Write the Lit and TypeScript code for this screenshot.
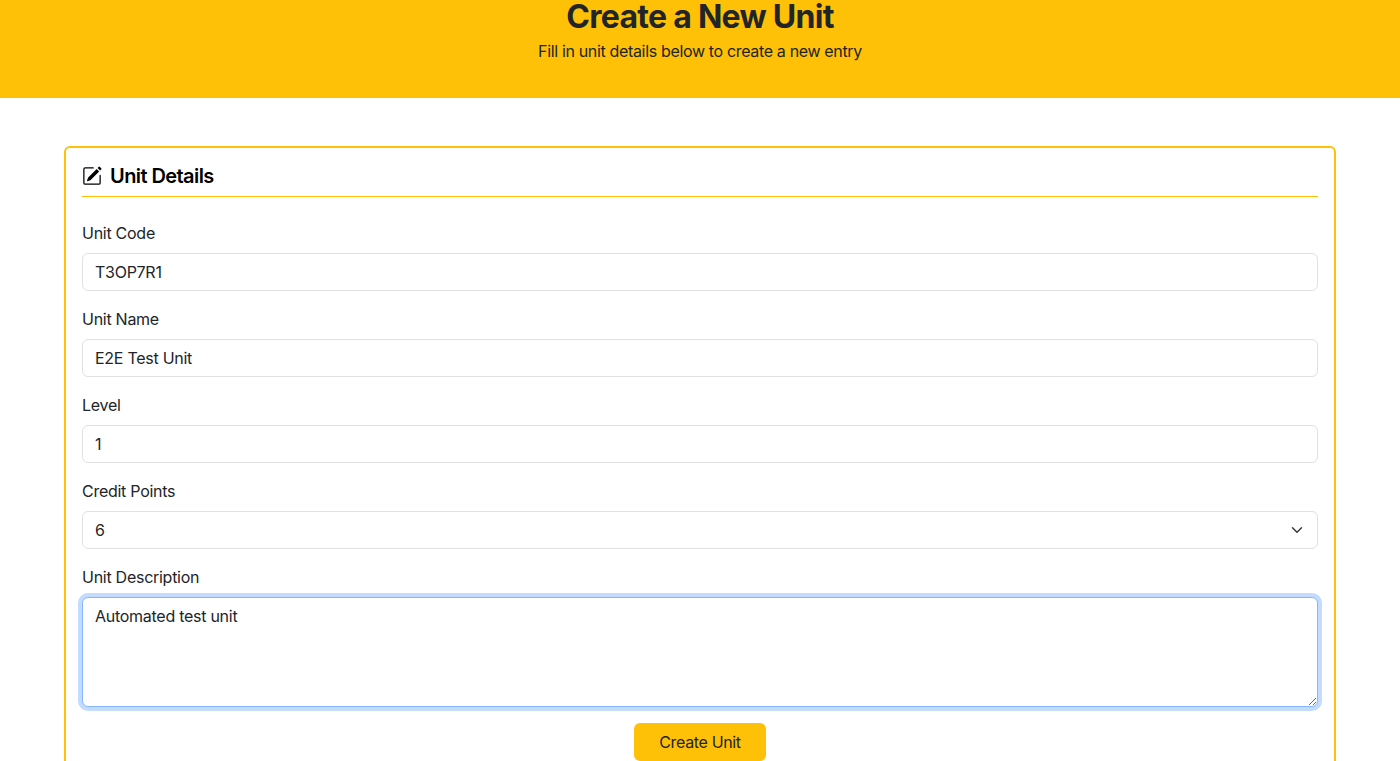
import { LitElement, html, css } from "lit";
import { customElement } from "lit/decorators.js";

@customElement("app-root")
export class AppRoot extends LitElement {
  static styles = css`
    :host {
      display: block;
      height: 761px;
      overflow: hidden;
      background: #fff;
      color: #212529;
      font: 400 16px/24px Inter, "Liberation Sans", sans-serif;
      letter-spacing: -0.27px;
    }
    *, *::before, *::after { box-sizing: border-box; }
    .banner {
      height: 98px;
      background: #ffc107;
      text-align: center;
    }
    h1 {
      margin: 0 0 5px;
      font-size: 32px;
      line-height: 34px;
      font-weight: 700;
      letter-spacing: -0.72px;
    }
    p { margin: 0; letter-spacing: -0.34px; }
    .card {
      margin: 48px 64px 0;
      padding: 16px;
      height: 700px;
      border: 2px solid #ffc107;
      border-radius: 6px;
    }
    .heading {
      display: flex;
      align-items: center;
      gap: 8px;
      height: 33px;
      margin: 0 0 24px;
      padding-bottom: 9px;
      border-bottom: 1px solid #ffc107;
      color: #000;
      font-size: 20px;
      line-height: 24px;
      font-weight: 600;
      letter-spacing: -0.58px;
    }
    .heading svg { display: block; }
    .field { margin-bottom: 16px; }
    label { display: block; margin-bottom: 8px; }
    .control {
      display: block;
      width: 100%;
      height: 38px;
      margin: 0;
      padding: 6px 12px;
      border: 1px solid #dee2e6;
      border-radius: 6px;
      background: #fff;
      color: #212529;
      font: inherit;
      letter-spacing: inherit;
      appearance: none;
      outline: 0;
    }
    .select { display: flex; align-items: center; justify-content: space-between; }
    textarea.control {
      height: 110px;
      resize: vertical;
      border-color: #86b7fe;
      box-shadow: 0 0 0 4px rgba(13, 110, 253, 0.25);
    }
    .actions { display: flex; justify-content: center; }
    button {
      width: 132px;
      height: 38px;
      padding: 0;
      border: 0;
      border-radius: 6px;
      background: #ffc107;
      color: #212529;
      font: inherit;
      letter-spacing: -0.34px;
    }
  `;

  render() {
    return html`
      <header class="banner">
        <h1>Create a New Unit</h1>
        <p>Fill in unit details below to create a new entry</p>
      </header>
      <section class="card">
        <h2 class="heading">
          <svg width="20" height="20" viewBox="0 0 16 16" fill="currentColor">
            <path d="M15.502 1.94a.5.5 0 0 1 0 .706L14.459 3.69l-2-2L13.502.646a.5.5 0 0 1 .707 0l1.293 1.293zm-1.75 2.456-2-2L4.939 9.21a.5.5 0 0 0-.121.196l-.805 2.414a.25.25 0 0 0 .316.316l2.414-.805a.5.5 0 0 0 .196-.12l6.813-6.814z"/>
            <path fill-rule="evenodd" d="M1 13.5A1.5 1.5 0 0 0 2.5 15h11a1.5 1.5 0 0 0 1.5-1.5v-6a.5.5 0 0 0-1 0v6a.5.5 0 0 1-.5.5h-11a.5.5 0 0 1-.5-.5v-11a.5.5 0 0 1 .5-.5H9a.5.5 0 0 0 0-1H2.5A1.5 1.5 0 0 0 1 2.5v11z"/>
          </svg>
          <span>Unit Details</span>
        </h2>
        <div class="field"><label for="code">Unit Code</label><input class="control" id="code" .value=${"T3OP7R1"}></div>
        <div class="field"><label for="name">Unit Name</label><input class="control" id="name" .value=${"E2E Test Unit"}></div>
        <div class="field"><label for="level">Level</label><input class="control" id="level" .value=${"1"}></div>
        <div class="field">
          <label>Credit Points</label>
          <div class="control select">
            <span>6</span>
            <svg width="16" height="12" viewBox="0 0 16 16" fill="none"><path stroke="#343a40" stroke-linecap="round" stroke-linejoin="round" stroke-width="2" d="m2 5 6 6 6-6"/></svg>
          </div>
        </div>
        <div class="field"><label for="desc">Unit Description</label><textarea class="control" id="desc" .value=${"Automated test unit"}></textarea></div>
        <div class="actions"><button type="button">Create Unit</button></div>
      </section>
    `;
  }
}
